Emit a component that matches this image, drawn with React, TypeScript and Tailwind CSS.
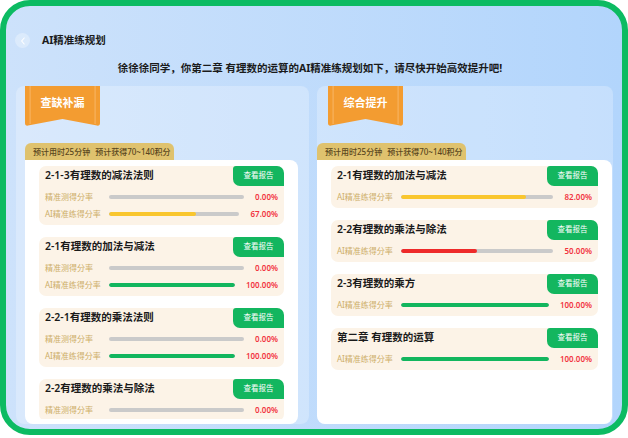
import React from "react";

type Row = { label: string; value: number; color: string };
type Item = { title: string; rows: Row[] };

const leftItems: Item[] = [
  {
    title: "2-1-3有理数的减法法则",
    rows: [
      { label: "精准测得分率", value: 0, color: "#c9c9c9" },
      { label: "AI精准练得分率", value: 67, color: "#f9c62e" },
    ],
  },
  {
    title: "2-1有理数的加法与减法",
    rows: [
      { label: "精准测得分率", value: 0, color: "#c9c9c9" },
      { label: "AI精准练得分率", value: 100, color: "#12b65e" },
    ],
  },
  {
    title: "2-2-1有理数的乘法法则",
    rows: [
      { label: "精准测得分率", value: 0, color: "#c9c9c9" },
      { label: "AI精准练得分率", value: 100, color: "#12b65e" },
    ],
  },
  {
    title: "2-2有理数的乘法与除法",
    rows: [{ label: "精准测得分率", value: 0, color: "#c9c9c9" }],
  },
];

const rightItems: Item[] = [
  { title: "2-1有理数的加法与减法", rows: [{ label: "AI精准练得分率", value: 82, color: "#f9c62e" }] },
  { title: "2-2有理数的乘法与除法", rows: [{ label: "AI精准练得分率", value: 50, color: "#ee2a2a" }] },
  { title: "2-3有理数的乘方", rows: [{ label: "AI精准练得分率", value: 100, color: "#12b65e" }] },
  { title: "第二章 有理数的运算", rows: [{ label: "AI精准练得分率", value: 100, color: "#12b65e" }] },
];

function Ribbon({ text }: { text: string }) {
  return (
    <div className="relative w-[75px] h-[40px]">
      <svg width="75" height="40" viewBox="0 0 75 40" className="absolute inset-0">
        <path d="M0 0 H75 V37 Q75 40 72 39.6 L37.5 33 L3 39.6 Q0 40 0 37 Z" fill="#f39c31" />
        <rect x="4.5" y="0" width="1.2" height="38" fill="#f7b86a" opacity="0.8" />
        <rect x="69.5" y="0" width="1.2" height="38" fill="#f7b86a" opacity="0.8" />
      </svg>
      <div className="relative flex h-[34px] items-center justify-center text-[11px] font-bold text-white">
        {text}
      </div>
    </div>
  );
}

function Tag() {
  return (
    <div className="flex h-[17px] w-[149px] items-center rounded-t-[6px] bg-[#dfc26e] pl-[8px] text-[8px] font-medium text-[#5a4720] whitespace-nowrap">
      <span>预计用时25分钟</span>
      <span className="ml-[5px]">预计获得70~140积分</span>
    </div>
  );
}

function ItemCard({ item }: { item: Item }) {
  return (
    <div className="shrink-0 rounded-[7px] bg-[#fcf3e7] pb-[5px]">
      <div className="flex h-[20px] items-center justify-between">
        <div className="pl-[6px] text-[10.5px] font-semibold text-[#1a1a1a] whitespace-nowrap">{item.title}</div>
        <div className="flex h-[20px] w-[51px] items-center justify-center rounded-tl-[3px] rounded-tr-[7px] rounded-bl-[7px] bg-[#13b65f] text-[7.5px] text-white">
          查看报告
        </div>
      </div>
      <div className="mt-[5px] flex flex-col gap-[5px] pl-[6px] pr-[6px]">
        {item.rows.map((r, i) => (
          <div key={i} className="flex h-[12px] items-center">
            <div className="w-[64px] shrink-0 text-[8px] text-[#cdae67] whitespace-nowrap">{r.label}</div>
            <div className="h-[4px] flex-1 overflow-hidden rounded-full bg-[#cacaca]">
              <div className="h-full rounded-full" style={{ width: `${r.value}%`, backgroundColor: r.color }} />
            </div>
            <div className="ml-[11px] text-[8px] font-semibold text-[#f2333f] whitespace-nowrap">
              {r.value.toFixed(2)}%
            </div>
          </div>
        ))}
      </div>
    </div>
  );
}

function Panel({
  title,
  items,
  width,
  ribbonMl,
  cardMl,
  cardW,
}: {
  title: string;
  items: Item[];
  width: string;
  ribbonMl: string;
  cardMl: string;
  cardW: string;
}) {
  return (
    <div className={`${width} flex h-[338px] flex-col rounded-[8px] bg-white/25`}>
      <div className={ribbonMl}>
        <Ribbon text={title} />
      </div>
      <div className={`${cardMl} mt-[17px]`}>
        <Tag />
      </div>
      <div className={`${cardMl} ${cardW} flex min-h-0 flex-1 flex-col rounded-tr-[8px] rounded-b-[8px] bg-white px-[14px] pt-[6px] pb-[5px]`}>
        <div className="flex min-h-0 flex-1 flex-col gap-[12px] overflow-hidden">
          {items.map((it, i) => (
            <ItemCard key={i} item={it} />
          ))}
        </div>
      </div>
    </div>
  );
}

export default function App() {
  return (
    <div
      className="h-[438px] w-[628px] bg-white"
      style={{ fontFamily: '"Noto Sans", "Noto Sans CJK SC", sans-serif' }}
    >
      <div className="h-[435px] w-[628px] overflow-hidden rounded-[30px] border-[6px] border-[#0cbb62] bg-gradient-to-r from-[#cde2fb] to-[#b2d5fc]">
        <div className="ml-[9px] mt-[27px] flex h-[15px] items-center gap-[12px]">
          <div className="flex h-[15px] w-[15px] items-center justify-center rounded-full bg-white/30">
            <svg width="6" height="8" viewBox="0 0 6 8">
              <path d="M4.2 1 L1.6 4 L4.2 7" fill="none" stroke="white" strokeWidth="1.1" strokeLinecap="round" strokeLinejoin="round" />
            </svg>
          </div>
          <div className="text-[10.5px] font-bold text-[#1a1a1a]">AI精准练规划</div>
        </div>
        <div className="mt-[14px] flex h-[14px] items-center justify-center pr-[8px] text-[10.5px] font-bold text-[#1a1a1a] whitespace-nowrap">
          徐徐徐同学，你第二章 有理数的运算的AI精准练规划如下，请尽快开始高效提升吧!
        </div>
        <div className="ml-[10px] mt-[10px] flex gap-[8px]">
          <Panel
            title="查缺补漏"
            items={leftItems}
            width="w-[293px]"
            ribbonMl="ml-[9px]"
            cardMl="ml-[9px]"
            cardW="w-[273px]"
          />
          <Panel
            title="综合提升"
            items={rightItems}
            width="w-[296px]"
            ribbonMl="ml-[11px]"
            cardMl="ml-0"
            cardW="w-[295px]"
          />
        </div>
      </div>
    </div>
  );
}
